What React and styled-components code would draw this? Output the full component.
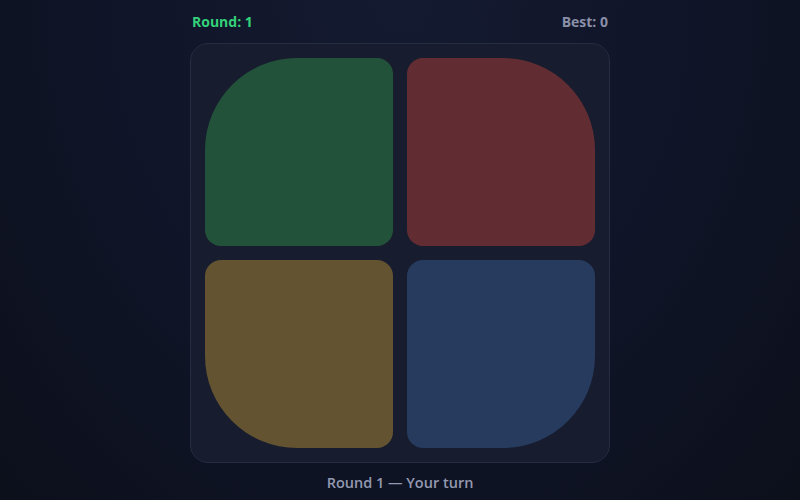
import React from "react";
import styled, { createGlobalStyle } from "styled-components";

const Global = createGlobalStyle`
  html, body { margin: 0; padding: 0; }
  body {
    width: 800px;
    height: 500px;
    overflow: hidden;
    background: radial-gradient(ellipse at 50% 0%, #141a2f 0%, #10152a 45%, #0c101b 100%);
    font-family: "Open Sans", "Noto Sans", sans-serif;
  }
`;

const Page = styled.main`
  display: flex;
  flex-direction: column;
  align-items: center;
  padding-top: 11px;
`;

const Header = styled.header`
  width: 416px;
  display: flex;
  justify-content: space-between;
  align-items: center;
  height: 20px;
  font-size: 14px;
  font-weight: 700;
  margin-bottom: 12px;
`;

const Stat = styled.span`
  color: ${(p) => p.$color};
`;

const Board = styled.section`
  box-sizing: border-box;
  width: 420px;
  height: 420px;
  padding: 14px;
  display: grid;
  grid-template-columns: 1fr 1fr;
  grid-template-rows: 1fr 1fr;
  gap: 14px;
  background: #171c2e;
  border: 1px solid #262c41;
  border-radius: 18px;
`;

const R = 92;
const r = 16;

const Pad = styled.button`
  border: none;
  padding: 0;
  cursor: pointer;
  background: ${(p) => p.$color};
  border-radius: ${(p) =>
    [
      p.$corner === "tl" ? R : r,
      p.$corner === "tr" ? R : r,
      p.$corner === "br" ? R : r,
      p.$corner === "bl" ? R : r,
    ]
      .map((v) => v + "px")
      .join(" ")};
`;

const Status = styled.p`
  margin: 10px 0 0;
  font-size: 14.5px;
  font-weight: 600;
  color: #9499b1;
  line-height: 20px;
`;

const pads = [
  { id: "green", color: "#22533a", corner: "tl" },
  { id: "red", color: "#612d33", corner: "tr" },
  { id: "yellow", color: "#635330", corner: "bl" },
  { id: "blue", color: "#263b5e", corner: "br" },
];

export default function App() {
  return (
    <>
      <Global />
      <Page>
        <Header>
          <Stat $color="#34d17a">Round: 1</Stat>
          <Stat $color="#8a8fa8">Best: 0</Stat>
        </Header>
        <Board>
          {pads.map((p) => (
            <Pad key={p.id} aria-label={p.id} $color={p.color} $corner={p.corner} />
          ))}
        </Board>
        <Status>Round 1 — Your turn</Status>
      </Page>
    </>
  );
}
